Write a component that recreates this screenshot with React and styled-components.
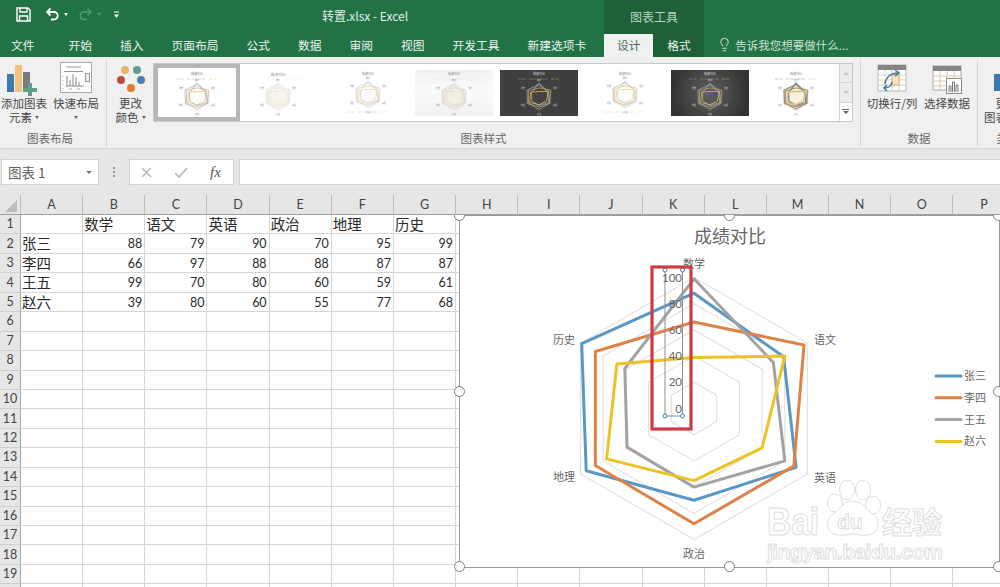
import React from "react";
import styled, { createGlobalStyle } from "styled-components";
import { Lightbulb } from "lucide-react";

const CJK = '"Noto Sans CJK SC", "Noto Sans", sans-serif';
const LATIN = 'Lato, "Noto Sans CJK SC", sans-serif';

const Global = createGlobalStyle`
  html, body { margin: 0; padding: 0; background: #fff; overflow: hidden; }
  body { font-family: ${CJK}; }
  * { box-sizing: border-box; }
`;

const Page = styled.div`
  width: 1000px;
  height: 587px;
  overflow: hidden;
  display: flex;
  flex-direction: column;
`;

/* ---------- title bar ---------- */
const TitleBar = styled.header`
  height: 34px;
  flex: none;
  background: #217346;
  display: flex;
  color: #fff;
`;
const TitleLeft = styled.div`
  width: 604px;
  display: flex;
  align-items: center;
  padding-bottom: 3px;
`;
const Qat = styled.div`
  width: 322px;
  padding: 0 0 2px 16px;
  display: flex;
  align-items: center;
`;
const QatIcon = styled.svg`
  display: block;
  flex: none;
  margin-right: ${(p) => p.$gap || 0}px;
`;
const Caret = styled.span`
  display: inline-block;
  flex: none;
  width: 0;
  height: 0;
  border-left: ${(p) => p.$size || 2.5}px solid transparent;
  border-right: ${(p) => p.$size || 2.5}px solid transparent;
  border-top: ${(p) => (p.$size ? p.$size * 1.1 : 3)}px solid ${(p) => p.$color || "#666"};
  margin-left: ${(p) => p.$left ?? 3}px;
  margin-right: ${(p) => p.$right ?? 0}px;
  vertical-align: middle;
`;
const DocTitle = styled.div`
  font-size: 12px;
  color: #e3ece6;
  white-space: nowrap;
`;
const ContextHead = styled.div`
  width: 100px;
  background: #1e6038;
  color: #b7d2c2;
  font-size: 12px;
  display: flex;
  align-items: center;
  justify-content: center;
  padding-bottom: 1px;
`;

/* ---------- tabs ---------- */
const TabRow = styled.nav`
  height: 23px;
  flex: none;
  background: #217346;
  display: flex;
  align-items: stretch;
  font-size: 11.75px;
`;
const Tab = styled.div`
  padding: 0 14px 2px;
  color: #eef4f0;
  display: flex;
  align-items: center;
  white-space: nowrap;
  &:first-child { padding: 0 20px 2px 11px; }
`;
const ActiveTab = styled(Tab)`
  background: #f0f0f0;
  color: #3f6d52;
  margin-left: 4px;
  padding: 0 12.75px 2px;
`;
const DarkTab = styled(Tab)`
  background: #1e6038;
  width: 51px;
`;
const TellMe = styled.div`
  margin-left: 13px;
  padding-bottom: 2px;
  display: flex;
  align-items: center;
  gap: 3px;
  color: #cfe0d6;
  font-size: 11.5px;
  white-space: nowrap;
`;

/* ---------- ribbon ---------- */
const Ribbon = styled.section`
  height: 92px;
  flex: none;
  background: #f0f0f0;
  border-bottom: 1px solid #d4d4d4;
  padding: 3px 0 1px;
  display: flex;
  overflow: hidden;
  color: #474747;
  font-size: 11.5px;
`;
const Group = styled.div`
  width: ${(p) => p.$w}px;
  flex: none;
  display: flex;
  flex-direction: column;
  border-right: ${(p) => (p.$last ? "none" : "1px solid #d6d6d6")};
`;
const GroupBody = styled.div`
  flex: 1;
  display: flex;
  padding-top: 2px;
  min-height: 0;
`;
const GroupLabel = styled.div`
  height: 16px;
  line-height: 14px;
  text-align: center;
  font-size: 11.5px;
  color: #666;
  white-space: nowrap;
  padding-right: ${(p) => p.$pr || 0}px;
`;
const RibbonBtn = styled.div`
  width: ${(p) => p.$w}px;
  flex: none;
  display: flex;
  flex-direction: column;
  align-items: center;
  line-height: 14px;
  white-space: nowrap;
`;
const BtnIcon = styled.svg`
  display: block;
  height: 34px;
  flex: none;
`;
const BtnLine = styled.div`
  height: 14px;
  display: flex;
  align-items: center;
  justify-content: center;
`;

/* ---------- gallery ---------- */
const Gallery = styled.div`
  width: 700px;
  height: 59px;
  margin: 1px 0 0 -1px;
  background: #fff;
  border: 1px solid #c8c8c8;
  display: flex;
  flex: none;
`;
const GalleryCell = styled.div`
  width: 85.6px;
  flex: none;
  display: flex;
  align-items: center;
  justify-content: center;
  border: ${(p) => (p.$selected ? "4px solid #b6b6b6" : "none")};
`;
const Thumb = styled.div`
  width: 78px;
  height: 46px;
  flex: none;
  background: ${(p) => p.$bg};
`;
const ThumbSvg = styled.svg`
  display: block;
`;
const GalleryScroll = styled.div`
  flex: 1;
  display: flex;
  flex-direction: column;
  border-left: 1px solid #d8d8d8;
`;
const ScrollBtn = styled.div`
  flex: 1;
  background: ${(p) => (p.$light ? "#fff" : "#ececec")};
  border-bottom: 1px solid #d8d8d8;
  display: flex;
  flex-direction: column;
  align-items: center;
  justify-content: center;
  gap: 1px;
  &:last-child { border-bottom: none; }
`;
const ScrollTri = styled.span`
  width: 0;
  height: 0;
  border-left: 3px solid transparent;
  border-right: 3px solid transparent;
  ${(p) => (p.$up ? "border-bottom" : "border-top")}: 3px solid ${(p) => p.$color || "#c4c4c4"};
`;
const ScrollBar = styled.span`
  width: 7px;
  height: 1px;
  background: #666;
`;

/* ---------- formula bar ---------- */
const FormulaBar = styled.div`
  height: 46px;
  flex: none;
  background: #e6e6e6;
  padding: 10px 0 10px 1px;
  display: flex;
  align-items: stretch;
`;
const NameBox = styled.div`
  width: 98px;
  background: #fff;
  border: 1px solid #d2d2d2;
  padding: 0 6px;
  display: flex;
  align-items: center;
  justify-content: space-between;
  font-size: 13.5px;
  color: #606060;
  font-family: ${CJK};
`;
const BarDots = styled.div`
  width: 30px;
  flex: none;
  display: flex;
  flex-direction: column;
  align-items: center;
  justify-content: center;
  gap: 2.5px;
`;
const BarDot = styled.span`
  width: 1.5px;
  height: 1.5px;
  background: #999;
`;
const FxGroup = styled.div`
  width: 105px;
  flex: none;
  background: #fff;
  border: 1px solid #d2d2d2;
  display: flex;
  align-items: center;
  padding-left: 11px;
  gap: 22px;
`;
const FxText = styled.span`
  font-family: "Liberation Serif", serif;
  font-style: italic;
  font-size: 15px;
  color: #555;
`;
const FormulaInput = styled.div`
  flex: 1;
  margin-left: 5px;
  background: #fff;
  border: 1px solid #d2d2d2;
  border-right: none;
`;

/* ---------- sheet ---------- */
const Sheet = styled.main`
  position: relative;
  flex: 1;
  overflow: hidden;
  background: #fff;
`;
const SheetGrid = styled.div`
  display: grid;
  grid-template-columns: 21px repeat(16, 62.17px);
  grid-template-rows: 20px;
  grid-auto-rows: 19.45px;
`;
const ColHead = styled.div`
  position: relative;
  z-index: 2;
  background: #e6e6e6;
  border-right: 1px solid #bcbcbc;
  border-bottom: 1px solid #9f9f9f;
  font: 12.5px ${LATIN};
  color: #444;
  display: flex;
  align-items: center;
  justify-content: center;
`;
const CornerHead = styled(ColHead)`
  &::after {
    content: "";
    position: absolute;
    right: 3px;
    bottom: 2px;
    width: 12px;
    height: 12px;
    background: #bdbdbd;
    clip-path: polygon(100% 0, 100% 100%, 0 100%);
  }
`;
const RowHead = styled.div`
  background: #e6e6e6;
  border-right: 1px solid #a8a8a8;
  border-bottom: 1px solid #cfcfcf;
  padding-bottom: 1px;
  font: 12.5px ${LATIN};
  color: #444;
  display: flex;
  align-items: center;
  justify-content: center;
`;
const Cell = styled.div`
  border-right: 1px solid #d6d6d6;
  border-bottom: 1px solid #d6d6d6;
  padding: 0 ${(p) => (p.$num ? 2 : 0)}px 0 1px;
  color: #2a2a2a;
  font: ${(p) => (p.$num ? `12.5px ${LATIN}` : `14.5px ${CJK}`)};
  text-align: ${(p) => (p.$num ? "right" : "left")};
  line-height: ${(p) => (p.$num ? 19 : 17)}px;
  white-space: nowrap;
  overflow: hidden;
`;

/* ---------- chart overlay ---------- */
const ChartBox = styled.div`
  position: absolute;
  z-index: 1;
  left: 459px;
  top: 20px;
  width: 541px;
  height: 353px;
  background: #fff;
  border: 1px solid #9a9a9a;
`;
const ChartSvg = styled.svg`
  position: absolute;
  left: -1px;
  top: -1px;
  overflow: visible;
`;
const Handle = styled.span`
  position: absolute;
  left: ${(p) => p.$x}%;
  top: ${(p) => p.$y}%;
  width: 11px;
  height: 11px;
  margin: -6px 0 0 -6px;
  border-radius: 50%;
  background: #fff;
  border: 1.5px solid #7e7e7e;
`;

/* ---------- data ---------- */
const SUBJECTS = ["数学", "语文", "英语", "政治", "地理", "历史"];
const TABLE = [
  ["张三", 88, 79, 90, 70, 95, 99],
  ["李四", 66, 97, 88, 88, 87, 87],
  ["王五", 99, 70, 80, 60, 59, 61],
  ["赵六", 39, 80, 60, 55, 77, 68],
];
const COLS = "ABCDEFGHIJKLMNOP".split("");
const COLORS = ["#5b97c4", "#dd8348", "#a3a3a3", "#ecc227"];

const pts = (values, cx, cy, k) =>
  values
    .map((v, i) => {
      const a = (Math.PI / 180) * (-90 + 60 * i);
      return `${(cx + Math.cos(a) * v * k).toFixed(1)},${(cy + Math.sin(a) * v * k).toFixed(1)}`;
    })
    .join(" ");
const ring = (v) => [v, v, v, v, v, v];

const THUMBS = [
  { bg: "#fff", legend: "top", ring: "#e4e4e4", lines: ["#9fb2c6", "#d8a67f", "#a8a8a8", "#e3c565"], text: "#777", w: 0.7 },
  { bg: "#fff", legend: "top", ring: "#ececec", lines: ["#e8e4da", "#eee3d4", "#e6e6e6", "#f1ead0"], text: "#888", w: 0.6, fill: "#f6f4ee", big: true, dx: -4 },
  { bg: "#fff", legend: "bottom", ring: "#e8e8e8", lines: ["#c2cdd8", "#e0bd9f", "#c4c4c4", "#e9d48b"], text: "#888", w: 0.6 },
  { bg: "linear-gradient(180deg,#f1f1f1,#fbfbfb 45%,#f1f1f1)", legend: "top", ring: "#e6e6e6", lines: ["#d4d8dc", "#e4d4c2", "#d8d8d8", "#eadfb5"], text: "#888", w: 0.7, fill: "#f2efe6" },
  { bg: "#3f3f3f", legend: "top", ring: "#666", lines: ["#8fa4b8", "#c99a64", "#a8a8a8", "#e3bb3e"], text: "#ddd", w: 0.8 },
  { bg: "#fff", legend: "bottom", ring: "#ececec", lines: ["#d0c8b8", "#e2c5a5", "#cfcfcf", "#ecd89b"], text: "#888", w: 0.9 },
  { bg: "radial-gradient(circle,#5e5e5e,#333 85%)", legend: "top", ring: "#6c6c6c", lines: ["#8fa4b8", "#c99a64", "#a8a8a8", "#e3bb3e"], text: "#ddd", w: 0.8 },
  { bg: "#fff", legend: "top", ring: "#e0e0e0", lines: ["#8a8f94", "#b99a70", "#86857f", "#d8c47c"], text: "#888", w: 1.3, fill: "#f5f1e3" },
];

function MiniChart({ t }) {
  const cx = 39 + (t.dx || 0);
  const cy = t.legend === "bottom" ? 25 : 27;
  const k = 14 / 100;
  const ly = t.legend === "top" ? 9 : 42;
  return (
    <ThumbSvg width="78" height="46" viewBox="0 0 78 46">
      <text x={cx} y={t.big ? 6 : 5} textAnchor="middle" fontSize={t.big ? 3.8 : 3} fill={t.text} fontFamily={CJK}>成绩对比</text>
      {[0, 1, 2, 3].map((i) => (
        <path key={i} d={`M${18 + i * 11} ${ly}h3.5m1 0h3`} stroke={t.lines[i]} strokeWidth="0.5" />
      ))}
      {[20, 40, 60, 80, 100].map((v) => (
        <polygon key={v} points={pts(ring(v), cx, cy, k)} fill={v === 100 && t.fill ? t.fill : "none"} stroke={t.ring} strokeWidth="0.35" />
      ))}
      {TABLE.map((row, i) => (
        <polygon key={i} points={pts(row.slice(1), cx, cy, k)} fill="none" stroke={t.lines[i]} strokeWidth={t.w} />
      ))}
      <path d={`M${cx - 2} ${cy - 12}V${cy}`} stroke={t.text} strokeWidth="0.3" strokeDasharray="0.8 2.2" />
      {SUBJECTS.map((s, i) => {
        const a = (Math.PI / 180) * (-90 + 60 * i);
        return (
          <text key={s} x={cx + Math.cos(a) * 18.5} y={cy + Math.sin(a) * 17 + 0.8} textAnchor="middle" fontSize="2" fill={t.text} fontFamily={CJK}>
            {s}
          </text>
        );
      })}
    </ThumbSvg>
  );
}

/* ---------- radar ---------- */
function Radar() {
  const cx = 694;
  const cy = 408.5;
  const k = 1.31;
  const label = { fontFamily: CJK, fontSize: 11, fill: "#666", textAnchor: "middle" };
  const mark = { fill: "#fff", stroke: "#dedede", strokeWidth: 1 };
  const sans = "Liberation Sans, sans-serif";
  return (
    <ChartSvg width="541" height="353" viewBox="459 215 541 353">
      <text x="730" y="243" textAnchor="middle" fontFamily={CJK} fontSize="18" fill="#666">成绩对比</text>

      {[20, 40, 60, 80, 100].map((v) => (
        <polygon key={v} points={pts(ring(v), cx, cy, k)} fill="none" stroke="#e2e2e2" strokeWidth="1.2" />
      ))}
      {TABLE.map((row, i) => (
        <polygon key={row[0]} points={pts(row.slice(1), cx, cy, k)} fill="none" stroke={COLORS[i]} strokeWidth="3" strokeLinejoin="round" />
      ))}

      <text {...label} x="694" y="268">数学</text>
      <text {...label} x="825" y="344">语文</text>
      <text {...label} x="825" y="482">英语</text>
      <text {...label} x="694" y="558">政治</text>
      <text {...label} x="564" y="481">地理</text>
      <text {...label} x="564" y="344">历史</text>

      <path d="M665 270V416H682.500V270" fill="none" stroke="#8f8f8f" strokeWidth="1" />
      {[100, 80, 60, 40, 20, 0].map((v) => (
        <text key={v} x="682" y={408.5 - v * 1.31 + 4} textAnchor="end" fontFamily={LATIN} fontSize="11.5" fill="#666">{v}</text>
      ))}
      {[[665, 270], [682.5, 270], [665, 416], [682.5, 416]].map(([x, y]) => (
        <circle key={`${x}-${y}`} cx={x} cy={y} r="2" fill="#fff" stroke="#3f86ad" strokeWidth="1" />
      ))}

      <rect x="652" y="267" width="39" height="162" fill="none" stroke="#cc3c46" strokeWidth="3.2" />

      {TABLE.map((row, i) => (
        <g key={row[0]}>
          <path d={`M936 ${376 + i * 21.8}h25`} stroke={COLORS[i]} strokeWidth="3" strokeLinecap="round" />
          <text x="964" y={380 + i * 21.8} fontFamily={CJK} fontSize="11" fill="#666">{row[0]}</text>
        </g>
      ))}

      <g>
        <ellipse cx="847" cy="490" rx="7.5" ry="10" {...mark} />
        <ellipse cx="863" cy="490" rx="7.5" ry="10" {...mark} />
        <ellipse cx="835" cy="503" rx="7.5" ry="9" {...mark} />
        <ellipse cx="873" cy="505" rx="7.5" ry="9" {...mark} />
        <path d="M853 501c-10 0-12 8-20 13-8 5-8 19 5 21 6 1 10-1 15-1s9 2 15 1c13-2 12-16 5-21-8-5-10-13-20-13z" {...mark} />
        <text x="767" y="535" fontFamily={sans} fontWeight="700" fontSize="38" textLength="52" lengthAdjust="spacingAndGlyphs" {...mark}>Bai</text>
        <text x="837" y="529" fontFamily={sans} fontWeight="700" fontSize="21" {...mark}>du</text>
        <text x="882" y="533" fontFamily={CJK} fontWeight="700" fontSize="30" {...mark}>经验</text>
        <text x="767" y="559" fontFamily={sans} fontWeight="700" fontSize="21" textLength="176" {...mark}>jingyan.baidu.com</text>
      </g>
    </ChartSvg>
  );
}

/* ---------- small drawings ---------- */
const AddElementIcon = () => (
  <BtnIcon width="42" height="34" viewBox="0 0 42 34">
    <rect x="4" y="12" width="7" height="18" fill="#3f78ad" />
    <rect x="12" y="3" width="7" height="27" fill="#f2c27d" />
    <rect x="20" y="10" width="7" height="17" fill="#7a7a7a" />
    <path d="M25 21h4v5h5v4h-5v5h-4v-5h-5v-4h5z" fill="#5f9e8f" />
  </BtnIcon>
);
const QuickLayoutIcon = () => (
  <BtnIcon width="32" height="34" viewBox="0 0 32 34">
    <rect x="0.5" y="0.5" width="31" height="30" fill="#fff" stroke="#a8a8a8" />
    <path d="M6 5h15M4 9.500h19" stroke="#9a9a9a" />
    <path d="M3 14v1M3 18v1M3 22v1M3 26v1" stroke="#b0b0b0" />
    <path d="M6 24h18M7 14v10M10 18v6M13 12v12M16 15v9M19 20v4" stroke="#8a8a8a" fill="none" />
    <rect x="25.500" y="11.500" width="4" height="8" fill="#eee" stroke="#999" />
    <path d="M9 27h3M17 27h3" stroke="#aaa" />
  </BtnIcon>
);
const ColorsIcon = () => (
  <BtnIcon width="30" height="34" viewBox="0 0 30 34">
    <circle cx="9" cy="8" r="4" fill="#e8b36b" />
    <circle cx="21" cy="8" r="4" fill="#5f9e8f" />
    <circle cx="5" cy="18" r="4" fill="#b94d43" />
    <circle cx="25" cy="18" r="4" fill="#4a7ebb" />
    <circle cx="15" cy="26" r="4" fill="#e2792b" />
  </BtnIcon>
);
const SwitchIcon = () => (
  <BtnIcon width="30" height="34" viewBox="0 0 30 34">
    <rect x="1" y="3" width="28" height="26" fill="#fff" stroke="#b5b5b5" />
    <rect x="1" y="3" width="28" height="5" fill="#858585" />
    <path d="M1 13h28M1 18h28M1 23h28M8 8v21M15 8v21M22 8v21" stroke="#d8d2c2" />
    <rect x="15" y="13" width="7" height="10" fill="#f8e2bf" stroke="#d9b177" />
    <path d="M8 22c1-7 6-11 13-11M18 8l4 3-4 3M15 20c0 4-4 6-8 6M10 23l-3 3 3 3" fill="none" stroke="#3f78ad" strokeWidth="1.5" />
  </BtnIcon>
);
const SelectDataIcon = () => (
  <BtnIcon width="30" height="34" viewBox="0 0 30 34">
    <rect x="1" y="4" width="28" height="24" fill="#fff" stroke="#a8a8a8" />
    <rect x="1" y="4" width="28" height="5" fill="#858585" />
    <path d="M1 14h28M1 19h28M1 24h28M8 9v19M15 9v19M22 9v19" stroke="#d9cba9" />
    <rect x="14.500" y="16.500" width="15" height="15" fill="#fff" stroke="#8a8a8a" />
    <path d="M17 30v-6h2v6M20.500 30v-10h2v10M24 30v-7h2v7" fill="none" stroke="#777" />
  </BtnIcon>
);
const ChangeTypeIcon = () => (
  <BtnIcon width="40" height="34" viewBox="0 0 40 34">
    <rect x="7" y="12" width="26" height="17" fill="#3f78ad" />
  </BtnIcon>
);

export default function App() {
  const rows = Array.from({ length: 20 }, (_, i) => i + 1);
  return (
    <Page>
      <Global />
      <TitleBar>
        <TitleLeft>
          <Qat>
            <QatIcon $gap={14} width="15" height="15" viewBox="0 0 15 15">
              <path d="M1 1h11l2 2v11H1z M4 1v4h7V1 M3.500 14V9h8v5" fill="none" stroke="#fff" strokeWidth="1.4" />
            </QatIcon>
            <QatIcon width="15" height="15" viewBox="0 0 15 15">
              <path d="M5.500 1.500L2 5l3.500 3.500M2.500 5H9a3.500 3.500 0 0 1 0 7.500H6" fill="none" stroke="#fff" strokeWidth="1.8" />
            </QatIcon>
            <Caret $color="#fff" $left={4} $right={10} />
            <QatIcon width="15" height="15" viewBox="0 0 15 15">
              <path d="M9.500 1.500L13 5 9.500 8.500M12.500 5H6a3.500 3.500 0 0 0 0 7.500h3" fill="none" stroke="#55976f" strokeWidth="1.6" />
            </QatIcon>
            <Caret $color="#55976f" $left={4} $right={12} />
            <QatIcon width="7" height="9" viewBox="0 0 7 9">
              <path d="M1 2h5" stroke="#fff" />
              <path d="M1 4.500h5L3.500 8z" fill="#fff" />
            </QatIcon>
          </Qat>
          <DocTitle>转置.xlsx - Excel</DocTitle>
        </TitleLeft>
        <ContextHead>图表工具</ContextHead>
      </TitleBar>

      <TabRow>
        {["文件", "开始", "插入", "页面布局", "公式", "数据", "审阅", "视图", "开发工具", "新建选项卡"].map((t) => (
          <Tab key={t}>{t}</Tab>
        ))}
        <ActiveTab>设计</ActiveTab>
        <DarkTab>格式</DarkTab>
        <TellMe>
          <Lightbulb size={15} strokeWidth={1.4} color="#e6efe9" />
          告诉我您想要做什么...
        </TellMe>
      </TabRow>

      <Ribbon>
        <Group $w={107}>
          <GroupBody>
            <RibbonBtn $w={48}>
              <AddElementIcon />
              <BtnLine>添加图表</BtnLine>
              <BtnLine>元素<Caret /></BtnLine>
            </RibbonBtn>
            <RibbonBtn $w={56}>
              <QuickLayoutIcon />
              <BtnLine>快速布局</BtnLine>
              <BtnLine><Caret $left={0} /></BtnLine>
            </RibbonBtn>
          </GroupBody>
          <GroupLabel $pr={6}>图表布局</GroupLabel>
        </Group>

        <Group $w={754}>
          <GroupBody>
            <RibbonBtn $w={47}>
              <ColorsIcon />
              <BtnLine>更改</BtnLine>
              <BtnLine>颜色<Caret /></BtnLine>
            </RibbonBtn>
            <Gallery>
              {THUMBS.map((t, i) => (
                <GalleryCell key={i} $selected={i === 0}>
                  <Thumb $bg={t.bg}>
                    <MiniChart t={t} />
                  </Thumb>
                </GalleryCell>
              ))}
              <GalleryScroll>
                <ScrollBtn><ScrollTri $up /></ScrollBtn>
                <ScrollBtn><ScrollTri /></ScrollBtn>
                <ScrollBtn $light><ScrollBar /><ScrollTri $color="#666" /></ScrollBtn>
              </GalleryScroll>
            </Gallery>
          </GroupBody>
          <GroupLabel>图表样式</GroupLabel>
        </Group>

        <Group $w={117}>
          <GroupBody>
            <RibbonBtn $w={62}>
              <SwitchIcon />
              <BtnLine>切换行/列</BtnLine>
            </RibbonBtn>
            <RibbonBtn $w={48}>
              <SelectDataIcon />
              <BtnLine>选择数据</BtnLine>
            </RibbonBtn>
          </GroupBody>
          <GroupLabel>数据</GroupLabel>
        </Group>

        <Group $w={60} $last>
          <GroupBody>
            <RibbonBtn $w={58}>
              <ChangeTypeIcon />
              <BtnLine>更改</BtnLine>
              <BtnLine>图表类型</BtnLine>
            </RibbonBtn>
          </GroupBody>
          <GroupLabel>类型</GroupLabel>
        </Group>
      </Ribbon>

      <FormulaBar>
        <NameBox>
          图表 1
          <Caret $color="#777" $size={3.5} $left={0} />
        </NameBox>
        <BarDots><BarDot /><BarDot /><BarDot /></BarDots>
        <FxGroup>
          <svg width="11" height="11" viewBox="0 0 11 11">
            <path d="M1 1l9 9M10 1l-9 9" stroke="#b9b9b9" strokeWidth="1.5" />
          </svg>
          <svg width="14" height="11" viewBox="0 0 14 11">
            <path d="M1 6l4 4 8-9" fill="none" stroke="#b9b9b9" strokeWidth="1.7" />
          </svg>
          <FxText>fx</FxText>
        </FxGroup>
        <FormulaInput />
      </FormulaBar>

      <Sheet>
        <SheetGrid>
          <CornerHead />
          {COLS.map((c) => (
            <ColHead key={c}>{c}</ColHead>
          ))}
          {rows.map((r) => (
            <React.Fragment key={r}>
              <RowHead>{r}</RowHead>
              {COLS.map((c, ci) => {
                let value = "";
                let num = false;
                if (r === 1 && ci > 0 && ci <= 6) value = SUBJECTS[ci - 1];
                if (r >= 2 && r <= 5 && ci <= 6) {
                  value = TABLE[r - 2][ci];
                  num = ci > 0;
                }
                return <Cell key={c} $num={num}>{value}</Cell>;
              })}
            </React.Fragment>
          ))}
        </SheetGrid>
        <ChartBox>
          <Radar />
          <Handle $x={0} $y={0} />
          <Handle $x={50} $y={0} />
          <Handle $x={100} $y={0} />
          <Handle $x={0} $y={50} />
          <Handle $x={100} $y={50} />
          <Handle $x={0} $y={100} />
          <Handle $x={50} $y={100} />
          <Handle $x={100} $y={100} />
        </ChartBox>
      </Sheet>
    </Page>
  );
}
